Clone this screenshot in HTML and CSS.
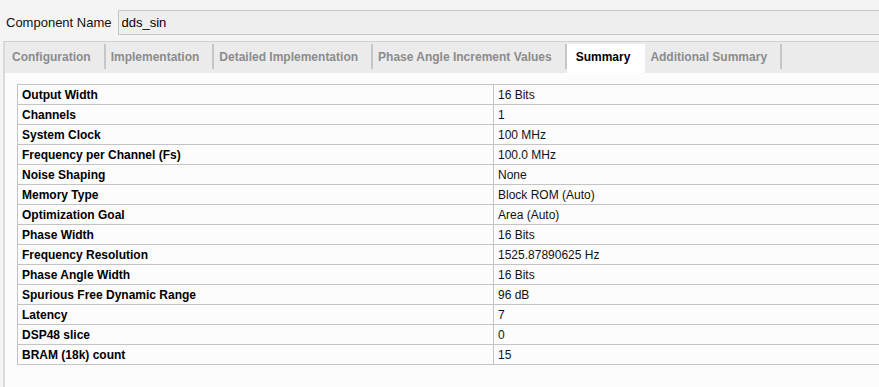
FILE: index.html
```html
<!DOCTYPE html>
<html>
<head>
	<title>Summary</title>
	<link rel="stylesheet" href="styles.css">
</head>
<body>
	<div class="name-row">
		<label for="compname">Component Name</label>
		<input type="text" id="compname" value="dds_sin">
	</div>
	<div class="panel">
		<div class="tabs">
			<div class="tab">Configuration</div>
			<div class="tab">Implementation</div>
			<div class="tab">Detailed Implementation</div>
			<div class="tab">Phase Angle Increment Values</div>
			<div class="tab active">Summary</div>
			<div class="tab">Additional Summary</div>
		</div>
		<div class="content">
			<table class="summary">
				<tr><td class="key">Output Width</td><td>16 Bits</td></tr>
				<tr><td class="key">Channels</td><td>1</td></tr>
				<tr><td class="key">System Clock</td><td>100 MHz</td></tr>
				<tr><td class="key">Frequency per Channel (Fs)</td><td>100.0 MHz</td></tr>
				<tr><td class="key">Noise Shaping</td><td>None</td></tr>
				<tr><td class="key">Memory Type</td><td>Block ROM (Auto)</td></tr>
				<tr><td class="key">Optimization Goal</td><td>Area (Auto)</td></tr>
				<tr><td class="key">Phase Width</td><td>16 Bits</td></tr>
				<tr><td class="key">Frequency Resolution</td><td>1525.87890625 Hz</td></tr>
				<tr><td class="key">Phase Angle Width</td><td>16 Bits</td></tr>
				<tr><td class="key">Spurious Free Dynamic Range</td><td>96 dB</td></tr>
				<tr><td class="key">Latency</td><td>7</td></tr>
				<tr><td class="key">DSP48 slice</td><td>0</td></tr>
				<tr><td class="key">BRAM (18k) count</td><td>15</td></tr>
			</table>
		</div>
	</div>
</body>
</html>
```
FILE: styles.css
```css
html, body{
	margin: 0;
	padding: 0;
	height: 387px;
	overflow: hidden;
}
body{
	background: #f4f4f4;
	font-family: 'Liberation Sans', Arial, sans-serif;
	font-size: 12px;
	color: #000;
}
.name-row{
	display: flex;
	align-items: center;
	padding: 10px 0 0 6px;
}
.name-row label{
	font-size: 13px;
	margin-right: 6px;
	color: #111;
}
.name-row input{
	flex: 1;
	min-width: 0;
	height: 23px;
	margin: 0;
	padding: 0 3px;
	border: 1px solid #c6c6c6;
	border-right: none;
	background: #eeeeee;
	font-family: 'Liberation Sans', Arial, sans-serif;
	font-size: 13px;
	color: #000;
	outline: none;
}
.panel{
	margin: 6px 0 0 3px;
	border-top: 1px solid #cfcfcf;
	border-left: 2px solid #dadada;
	height: 345px;
	overflow: hidden;
	background: #fcfcfc;
}
.tabs{
	display: flex;
	background: #ebebeb;
	padding: 2px 0 0 0;
}
.tab{
	height: 29px;
	line-height: 27px;
	padding: 0 15px 0 7px;
	font-weight: bold;
	color: #8c8c8c;
	background: linear-gradient(#c6c6c6, #c6c6c6) right top / 2px 25px no-repeat;
}
.tab + .tab{
	padding-left: 5px;
}
.tab.active{
	background: #fff;
	color: #000;
	padding: 0 15px 0 9px;
}
.content{
	padding: 11px 0 0 12px;
}
.summary{
	border-collapse: collapse;
	width: 900px;
	table-layout: fixed;
}
.summary td{
	height: 19px;
	padding: 0 4px;
	border-top: 1px solid #c4c4c4;
	border-bottom: 1px solid #c4c4c4;
	border-left: 1px solid #c4c4c4;
	color: #111;
	white-space: nowrap;
}
.summary td.key{
	width: 467px;
	font-weight: bold;
	color: #000;
}
```
